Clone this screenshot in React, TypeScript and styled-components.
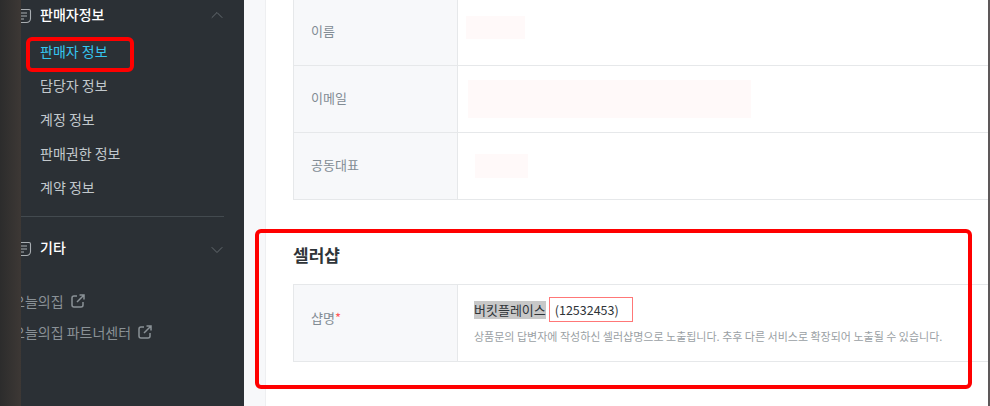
import styled, { createGlobalStyle } from 'styled-components'
import { ChevronDown, ChevronUp } from 'lucide-react'

const GlobalStyle = createGlobalStyle`
  html, body {
    margin: 0;
    padding: 0;
    height: 100%;
    overflow: hidden;
  }
  body {
    font-family: "Noto Sans CJK KR", "Noto Sans", sans-serif;
  }
`

const Page = styled.div`
  position: relative;
  display: flex;
  width: 990px;
  height: 406px;
  overflow: hidden;
  background: #f7f8fa;
`

const EdgeStrip = styled.div`
  flex: 0 0 21px;
  background: linear-gradient(90deg, #2c2c2c, #3d3835);
`

const Sidebar = styled.aside`
  flex: 0 0 223px;
  overflow: hidden;
  background: #2b3035;
  padding-right: 20px;
  box-sizing: border-box;
`

const GroupHeader = styled.div<{ $top: number; $bottom: number }>`
  display: flex;
  align-items: center;
  height: 22px;
  margin: ${p => p.$top}px 0 ${p => p.$bottom}px -5px;
  color: #fff;
  font-size: 14px;
  font-weight: 500;
  line-height: 22px;

  svg.doc {
    flex: none;
    margin: 3px 8px 0 0;
  }
`

const CollapseIcon = styled(ChevronUp)`
  margin: 2px -3px 0 auto;
  color: #6f767b;
`

const ExpandIcon = styled(ChevronDown)`
  margin: 6px -3px 0 auto;
  color: #6f767b;
`

const NavItem = styled.div<{ $active?: boolean }>`
  height: 34px;
  margin-left: 19px;
  color: ${p => (p.$active ? '#35c5f0' : '#c2c8cc')};
  font-size: 14px;
  line-height: 34px;
`

const Divider = styled.div`
  height: 1px;
  margin: 12px 0 0;
  background: #434a4f;
`

const OutLink = styled.div`
  display: flex;
  align-items: center;
  gap: 7px;
  height: 31px;
  margin-left: -9px;
  color: #8a9196;
  font-size: 14px;
`

const Main = styled.main`
  flex: 1;
  display: flex;
  padding-left: 21px;
  min-width: 0;
`

const Panel = styled.section`
  flex: 1;
  background: #fff;
  border-left: 1px solid #eeeff1;
  padding-left: 27px;
`

const Table = styled.div<{ $top: number }>`
  margin-top: ${p => p.$top}px;
  border-left: 1px solid #e6e8ea;
`

const Row = styled.div<{ $height: number; $ruled?: boolean }>`
  display: flex;
  height: ${p => p.$height}px;
  box-sizing: border-box;
  border-top: ${p => (p.$ruled ? '1px solid #e6e8ea' : 'none')};
  border-bottom: 1px solid #e6e8ea;
`

const Label = styled.div<{ $lift?: number }>`
  flex: 0 0 164px;
  display: flex;
  align-items: center;
  box-sizing: border-box;
  padding: 0 0 ${p => p.$lift ?? 4}px 17px;
  background: #f7f8fa;
  border-right: 1px solid #e6e8ea;
  color: #828c94;
  font-size: 13px;
`

const Required = styled.span`
  color: #ff5a5a;
`

const Value = styled.div`
  flex: 1;
  display: flex;
  align-items: center;
`

const Redacted = styled.div<{ $left: number; $width: number; $height: number; $shift?: number }>`
  width: ${p => p.$width}px;
  height: ${p => p.$height}px;
  margin-left: ${p => p.$left}px;
  margin-top: ${p => p.$shift ?? 0}px;
  background: #fff9f9;
`

const SectionTitle = styled.h2`
  margin: 42px 0 16px;
  height: 26px;
  color: #2f3438;
  font-size: 17px;
  font-weight: 700;
  line-height: 26px;
`

const ShopCell = styled.div`
  flex: 1;
  padding: 12px 0 0 16px;
`

const ShopLine = styled.div`
  display: flex;
  align-items: center;
  height: 25px;
  color: #2f3438;
  font-size: 13px;
`

const SelectedName = styled.span`
  background: #c8c8c8;
  line-height: 18px;
`

const IdBox = styled.span`
  display: flex;
  align-items: center;
  box-sizing: border-box;
  width: 84px;
  height: 25px;
  margin-left: 3px;
  padding-left: 5px;
  border: 1px solid #f77;
  font-size: 12.5px;
`

const Help = styled.p`
  margin: 6px 0 0;
  color: #9a9fa4;
  font-size: 11px;
  line-height: 16px;
  white-space: nowrap;
`

const ScrollEdge = styled.div`
  flex: 0 0 2px;
  background: #5d5859;
`

const Callout = styled.div<{ $x: number; $y: number; $w: number; $h: number; $r: number }>`
  position: absolute;
  left: ${p => p.$x}px;
  top: ${p => p.$y}px;
  width: ${p => p.$w}px;
  height: ${p => p.$h}px;
  box-sizing: border-box;
  border: 4px solid #ff0000;
  border-radius: ${p => p.$r}px;
  pointer-events: none;
`

const DocIcon = () => (
  <svg className="doc" width="16" height="16" viewBox="0 0 16 16" fill="none" stroke="#a9aeb2" strokeWidth="1.1">
    <path d="M1.5 1.5H13a1.5 1.5 0 0 1 1.5 1.5v7.5a4 4 0 0 1-4 4h-9" />
    <path d="M4 5h7M4 8h7M4 11h4" />
  </svg>
)

const OutIcon = () => (
  <svg width="14" height="14" viewBox="0 0 14 14" fill="none" stroke="#8a9196" strokeWidth="1.5">
    <path d="M6 2H3a2 2 0 0 0-2 2v7a2 2 0 0 0 2 2h7a2 2 0 0 0 2-2V8" />
    <path d="M6 8l7-7M8.5 1H13v4.5" />
  </svg>
)

export default function App() {
  return (
    <Page>
      <GlobalStyle />
      <EdgeStrip />
      <Sidebar>
        <GroupHeader $top={3} $bottom={9}>
          <DocIcon />
          판매자정보
          <CollapseIcon size={20} strokeWidth={1} />
        </GroupHeader>
        <NavItem $active>판매자 정보</NavItem>
        <NavItem>담당자 정보</NavItem>
        <NavItem>계정 정보</NavItem>
        <NavItem>판매권한 정보</NavItem>
        <NavItem>계약 정보</NavItem>
        <Divider />
        <GroupHeader $top={19} $bottom={27}>
          <DocIcon />
          기타
          <ExpandIcon size={20} strokeWidth={1} />
        </GroupHeader>
        <OutLink>
          오늘의집
          <OutIcon />
        </OutLink>
        <OutLink>
          오늘의집 파트너센터
          <OutIcon />
        </OutLink>
      </Sidebar>
      <Main>
        <Panel>
          <Table $top={-1}>
            <Row $height={67}>
              <Label>이름</Label>
              <Value>
                <Redacted $left={8} $width={59} $height={23} $shift={-9} />
              </Value>
            </Row>
            <Row $height={67}>
              <Label>이메일</Label>
              <Value>
                <Redacted $left={10} $width={283} $height={38} />
              </Value>
            </Row>
            <Row $height={67}>
              <Label>공동대표</Label>
              <Value>
                <Redacted $left={17} $width={53} $height={24} />
              </Value>
            </Row>
          </Table>
          <SectionTitle>셀러샵</SectionTitle>
          <Table $top={0}>
            <Row $height={78} $ruled>
              <Label $lift={12}>
                샵명<Required>*</Required>
              </Label>
              <ShopCell>
                <ShopLine>
                  <SelectedName>버킷플레이스</SelectedName>
                  <IdBox>(12532453)</IdBox>
                </ShopLine>
                <Help>상품문의 답변자에 작성하신 셀러샵명으로 노출됩니다. 추후 다른 서비스로 확장되어 노출될 수 있습니다.</Help>
              </ShopCell>
            </Row>
          </Table>
        </Panel>
        <ScrollEdge />
      </Main>
      <Callout $x={26} $y={37} $w={108} $h={35} $r={6} />
      <Callout $x={255} $y={229} $w={717} $h={160} $r={6} />
    </Page>
  )
}
